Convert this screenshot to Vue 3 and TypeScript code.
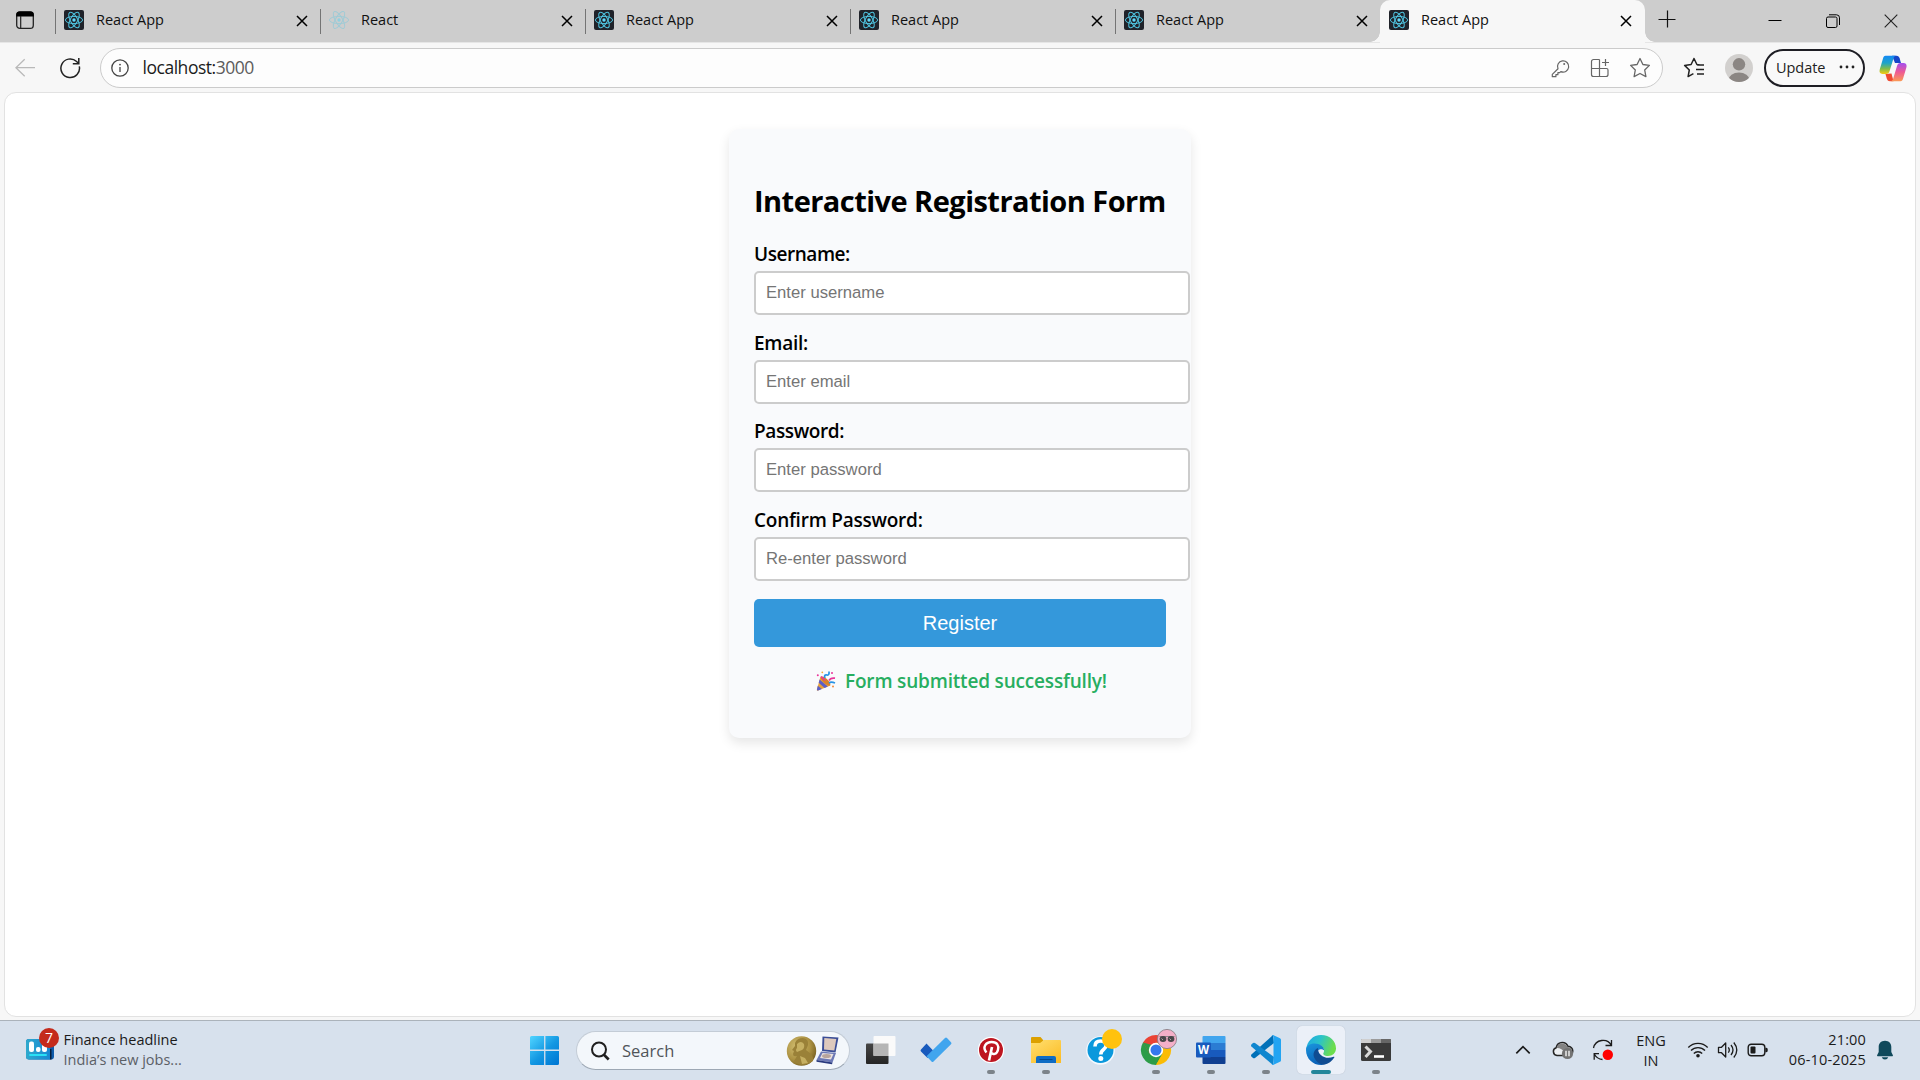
<script setup lang="ts">
import { ref } from 'vue'

interface Tab {
  title: string
  dark: boolean
  active?: boolean
}
interface Field {
  id: string
  label: string
  hint: string
  type: string
  cls: string
}

const tabs: Tab[] = [
  { title: 'React App', dark: true },
  { title: 'React', dark: false },
  { title: 'React App', dark: true },
  { title: 'React App', dark: true },
  { title: 'React App', dark: true },
  { title: 'React App', dark: true, active: true },
]

const fields: Field[] = [
  { id: 'username', label: 'Username:', hint: 'Enter username', type: 'text', cls: 'l-user' },
  { id: 'email', label: 'Email:', hint: 'Enter email', type: 'email', cls: 'l-mail' },
  { id: 'password', label: 'Password:', hint: 'Enter password', type: 'password', cls: 'l-pass' },
  { id: 'confirm', label: 'Confirm Password:', hint: 'Re-enter password', type: 'password', cls: 'l-conf' },
]

const values = ref<Record<string, string>>({ username: '', email: '', password: '', confirm: '' })
</script>

<template>
  <div class="screen">
    <header class="tabstrip">
      <div class="workspace">
        <svg width="20" height="20" viewBox="0 0 20 20">
          <rect x="1.7" y="2" width="16.6" height="16.4" rx="3.2" fill="none" stroke="#222" stroke-width="1.3" />
          <path d="M1.2 6.5V4.6A3.2 3.2 0 0 1 4.4 1.4h11.2a3.2 3.2 0 0 1 3.2 3.2v1.9z" fill="#000" />
          <path d="M5.7 6v12" stroke="#222" stroke-width="1.2" />
        </svg>
      </div>
      <div v-for="(tab, i) in tabs" :key="i" class="tab" :class="{ active: tab.active }">
        <span class="favicon" :class="{ dark: tab.dark }">
          <svg width="20" height="20" viewBox="-10 -10 20 20" fill="none" :stroke="tab.dark ? '#4fc3df' : '#9fcbd6'" stroke-width="1">
            <ellipse :rx="tab.dark ? 8.6 : 9.6" ry="3.6" />
            <ellipse :rx="tab.dark ? 8.6 : 9.6" ry="3.6" transform="rotate(60)" />
            <ellipse :rx="tab.dark ? 8.6 : 9.6" ry="3.6" transform="rotate(120)" />
            <circle r="1.7" :fill="tab.dark ? '#61dafb' : '#8fd0e0'" stroke="none" />
          </svg>
        </span>
        <span class="tab-title">{{ tab.title }}</span>
        <svg class="tab-close" width="12" height="12" viewBox="0 0 12 12">
          <path d="M1 1l10 10M11 1L1 11" stroke="#000" stroke-width="1.5" />
        </svg>
      </div>
      <svg class="plus" width="18" height="18" viewBox="0 0 18 18">
        <path d="M9.500 .5v17M.5 9.500h17" stroke="#111" stroke-width="1.2" />
      </svg>
      <div class="winbtns">
        <svg width="14" height="14" viewBox="0 0 14 14"><path d="M.5 6.500h13" stroke="#000" /></svg>
        <svg width="14" height="14" viewBox="0 0 14 14" fill="none" stroke="#000">
          <rect x=".5" y="3" width="10.500" height="10.500" rx="1.500" />
          <path d="M3 .8h7.500a3 3 0 0 1 3 3V11" />
        </svg>
        <svg width="14" height="14" viewBox="0 0 14 14"><path d="M.7.7l12.600 12.600M13.300.7L.7 13.300" stroke="#222" stroke-width="1.100" /></svg>
      </div>
    </header>

    <nav class="toolbar">
      <svg class="back" width="20" height="20" viewBox="0 0 20 20" fill="none" stroke="#b9b9b9" stroke-width="1.300">
        <path d="M20 9.700H.9M9.700 1.200L.9 9.700l8.800 8.500" />
      </svg>
      <svg class="reload" width="22" height="22" viewBox="0 0 22 22" fill="none" stroke="#222" stroke-width="1.500">
        <path d="M20.300 9.300A9.300 9.300 0 1 1 17.600 4.500L19.600 6.500M19.800 1v5.800h-6" />
      </svg>
      <div class="address">
        <svg width="18" height="18" viewBox="0 0 18 18" fill="none" stroke="#444" stroke-width="1.300">
          <circle cx="9" cy="9" r="8.200" />
          <path d="M9 8v5" />
          <circle cx="9" cy="5.600" r=".9" fill="#444" stroke="none" />
        </svg>
        <span class="url">localhost:<i>3000</i></span>
        <div class="addr-icons">
          <svg width="20" height="20" viewBox="0 0 20 20" fill="none" stroke="#666" stroke-width="1.200">
            <path d="M8 10.800L2.300 16.400v2.300h3.600v-2h2v-2h1.800l1.100-1.100a5.600 5.600 0 1 0-2.800-2.800z" stroke-linejoin="round" />
            <circle cx="14.200" cy="6" r="1" fill="#666" stroke="none" />
          </svg>
          <svg class="apps-add" width="20" height="20" viewBox="0 0 20 20" fill="none" stroke="#666" stroke-width="1.200">
            <path d="M9.500 1.500H3.500a2 2 0 0 0-2 2v13a2 2 0 0 0 2 2h12.500a2 2 0 0 0 2-2V12a1.500 1.500 0 0 0-1.500-1.500h-15M9.500 1.500v17M15.500 1v7M12 4.500h7" />
          </svg>
          <svg width="22" height="22" viewBox="0 0 22 22" fill="none" stroke="#666" stroke-width="1.300" stroke-linejoin="round">
            <path d="M11 1.500l2.900 6 6.500.9-4.700 4.600 1.200 6.600-5.900-3.100-5.900 3.100 1.200-6.600L1.600 8.400l6.500-.9z" />
          </svg>
        </div>
      </div>
      <svg class="favs" width="22" height="22" viewBox="0 0 22 22" fill="none" stroke="#222" stroke-width="1.500" stroke-linejoin="round">
        <path d="M17 8l-3.100-.5-2.900-6-2.900 6-6.500.9 4.700 4.600-1.200 6.600 5.300-2.900M14 8h7M13 12.500h8M14 17h7" />
      </svg>
      <svg class="avatar" width="28" height="28" viewBox="0 0 28 28">
        <defs><clipPath id="av"><circle cx="14" cy="14" r="14" /></clipPath></defs>
        <g clip-path="url(#av)">
          <path fill="#d2d0ce" d="M0 0h28v28H0z" />
          <circle cx="14" cy="10.300" r="6.200" fill="#8b8683" />
          <ellipse cx="14" cy="26" rx="10.500" ry="7.500" fill="#8b8683" />
        </g>
      </svg>
      <button class="update">
        <span>Update</span>
        <svg width="16" height="4" viewBox="0 0 16 4" fill="#222"><circle cx="2" cy="2" r="1.400" /><circle cx="8" cy="2" r="1.400" /><circle cx="14" cy="2" r="1.400" /></svg>
      </button>
      <svg class="copilot" width="28" height="27" viewBox="0 0 28 27">
        <defs>
          <linearGradient id="cpa" x1="0" y1="0" x2="0" y2="1"><stop offset="0" stop-color="#1389f5" /><stop offset=".4" stop-color="#1ea4c8" /><stop offset=".7" stop-color="#7dbb4e" /><stop offset="1" stop-color="#f8cb10" /></linearGradient>
          <linearGradient id="cpb" x1="0" y1="0" x2="0" y2="1"><stop offset="0" stop-color="#a24ef0" /><stop offset=".5" stop-color="#ee5a94" /><stop offset="1" stop-color="#fb9a55" /></linearGradient>
        </defs>
        <path d="M13 .8h4.500c1.700 0 2.600 1 3.100 2.500L22 8h-6z" fill="#1646c8" />
        <path d="M6.500 19l6-.5 2 7.800H11c-2 0-2.700-.9-3.300-3z" fill="#ef4b31" />
        <path d="M6.500.8h10.300c-1.300.4-2 1.500-2.500 3.200l-3.700 12c-.6 2-1.500 3-3.600 3H3.500C.8 19 0 17 .8 14.300L4 3.400C4.600 1.700 5 .8 6.500.8z" fill="url(#cpa)" />
        <path d="M21.500 26.200H12c1.200-.4 1.900-1.500 2.400-3.200L18 11c.6-2 1.500-3 3.500-3h3c2.700 0 3.600 1.900 2.800 4.700l-3.200 10.800c-.6 1.800-1.100 2.700-2.600 2.700z" fill="url(#cpb)" />
      </svg>
    </nav>

    <main class="viewport">
      <section class="card">
        <h2>Interactive Registration Form</h2>
        <form @submit.prevent>
          <div v-for="f in fields" :key="f.id" class="field">
            <label :for="f.id" :class="f.cls">{{ f.label }}</label>
            <input :id="f.id" v-model="values[f.id]" :type="f.type" :placeholder="f.hint" />
          </div>
          <button type="submit" class="register">Register</button>
        </form>
        <p class="success">
          <svg width="20" height="20" viewBox="0 0 20 20">
            <path d="M4.500 5.500L14.500 14.500 2 19.600Q.5 20 .9 18.400z" fill="#e9a23b" />
            <path d="M3.600 8.600l8.200 7L8.600 17 2.700 11.700zM1.800 14.800l4 3.300-3.500 1.400q-1.600.5-1.300-1.200z" fill="#5b5fc7" />
            <ellipse cx="9.600" cy="10" rx="6.200" ry="2.300" transform="rotate(43 9.600 10)" fill="#d9822b" />
            <path d="M5 5.500l4 4M13 9.500q1.500-3 6-2.300" stroke="#e9359b" stroke-width="1.700" fill="none" />
            <path d="M9 7q-1.500-3.500 2-3 2.500.5 2-3.500M13 12q2-1.800 6 0" stroke="#2893e6" stroke-width="1.700" fill="none" />
            <circle cx="1.800" cy="4.300" r="1" fill="#e9359b" /><circle cx="6.300" cy="1.300" r=".9" fill="#f2a93b" /><circle cx="16" cy="2" r="1" fill="#e9359b" /><circle cx="17" cy="15.500" r="1" fill="#f28a3b" />
          </svg>
          <span>Form submitted successfully!</span>
        </p>
      </section>
    </main>

    <footer class="taskbar">
      <div class="widgets">
        <div class="widget-icon">
          <svg width="28" height="21" viewBox="0 0 28 21">
            <defs><linearGradient id="wg" x1="0" x2="1"><stop stop-color="#2fa9cd" /><stop offset="1" stop-color="#1687d3" /></linearGradient></defs>
            <rect width="28" height="20.500" rx="3" fill="#0f5cab" />
            <path d="M3 0h21v20.500H3a3 3 0 0 1-3-3V3a3 3 0 0 1 3-3z" fill="url(#wg)" />
            <path d="M24 10h1.500v10.500H24z" fill="#071f3c" />
            <rect x="3" y="2.500" width="5" height="10.500" rx="2" fill="#fff" /><rect x="10" y="8" width="4.500" height="5" rx="2" fill="#fff" /><rect x="16" y="4" width="5" height="9" rx="2" fill="#fff" />
            <rect x="3" y="15" width="18" height="2" rx="1" fill="#29e0f5" />
          </svg>
          <span class="badge">7</span>
        </div>
        <div class="widget-text"><b>Finance headline</b><span>India’s new jobs...</span></div>
      </div>

      <div class="cell start">
        <svg width="48" height="48" viewBox="-24 -24 48 48">
          <defs><linearGradient id="win" gradientUnits="userSpaceOnUse" x1="-14" y1="-14" x2="12" y2="14"><stop stop-color="#4fd3ff" /><stop offset=".55" stop-color="#1297e2" /><stop offset="1" stop-color="#0078d4" /></linearGradient></defs>
          <path d="M-13.500-14H-.9V-.4H-15V-12.500a1.500 1.500 0 0 1 1.500-1.500zM.4-14H12.500a1.500 1.500 0 0 1 1.500 1.500V-.4H.4zM-15 .9H-.9V15H-13.500a1.500 1.500 0 0 1-1.500-1.500zM.4.9H14V13.500a1.500 1.500 0 0 1-1.500 1.500H.4z" fill="url(#win)" />
        </svg>
      </div>
      <div class="search">
        <svg width="20" height="20" viewBox="0 0 20 20" fill="none" stroke="#1f1f1f" stroke-width="2"><circle cx="9" cy="8.500" r="7" /><path d="M13.700 13.500l5 5" stroke-width="2.600" /></svg>
        <span>Search</span>
        <svg class="medal" width="54" height="32" viewBox="0 0 54 32">
          <defs><radialGradient id="md" cx=".35" cy=".35" r=".75"><stop stop-color="#d2bf72" /><stop offset=".6" stop-color="#ac9243" /><stop offset="1" stop-color="#715a1e" /></radialGradient></defs>
          <circle cx="15.500" cy="16" r="14.700" fill="url(#md)" />
          <path d="M9 8q2-5 8-5 6 1 5 7l-2 5 5 4q3 4 2 7-5 4-11 4-6-1-8-4l3-5q-4 1-4-2l1-3-2-1 3-4z" fill="#9a8138" />
          <path d="M11 9q4-4 7 0 1 4-2 6l-5 2q-2-2 0-4zM14 21l5 2 3 5-6 1z" fill="#c6b062" />
          <path d="M36.500 1.500l16 1-3 15-13.500-1.500z" fill="#3a4d96" /><path d="M38.300 3l12 1-2 11.500-10.300-1z" fill="#ddc9bd" />
          <path d="M35 16.500l15 1.500-3.500 9.500-16-2.500z" fill="#6b78b5" /><path d="M36.500 18l11 1-2.500 5.500-11-1.500z" fill="#e9e1df" /><ellipse cx="40.500" cy="21" rx="4.500" ry="2" fill="#b7a49d" />
          <path d="M30.500 25l16 2.500-.5 1.700-15.500-2.400z" fill="#27387d" />
        </svg>
      </div>

      <div class="apps">
        <div class="cell">
          <svg width="48" height="48" viewBox="-24 -24 48 48">
            <defs><linearGradient id="tv" x2="0" y2="1"><stop stop-color="#454545" /><stop offset="1" stop-color="#252525" /></linearGradient></defs>
            <rect x="-15" y="-6.500" width="22.500" height="20.500" rx="1" fill="url(#tv)" />
            <rect x="-7.500" y="-14" width="22" height="20" rx="1" fill="#fafafa" /><path d="M-7.500-6.500h15V6h-15z" fill="#b5b5b5" />
          </svg>
        </div>
        <div class="cell">
          <svg width="48" height="48" viewBox="-24 -24 48 48">
            <path d="M-9.500-6.500l7 7.500-6 7-6.500-6.500q-1-1 0-2z" fill="#185abd" /><path d="M9-12q1-1 2 0l4 4.200q1 1 0 2L-2.500 11.500q-1 1-2 0l-5-5.200z" fill="#41a5ee" />
          </svg>
        </div>
        <div class="cell run">
          <svg width="48" height="48" viewBox="-24 -24 48 48">
            <circle r="13.200" fill="#fff" /><circle r="12" fill="#bd1520" />
            <path d="M-2 10.500L1-3" stroke="#fff" stroke-width="2.700" fill="none" /><path d="M-4.600 2.500C-9-3 -5-8 .7-8S8-4.300 7-.3C6 4.500 1.500 5 0 2.300" stroke="#fff" stroke-width="2.400" fill="none" />
          </svg>
        </div>
        <div class="cell run">
          <svg width="48" height="48" viewBox="-24 -24 48 48">
            <defs><linearGradient id="fo" x2=".8" y2="1"><stop stop-color="#ffdf70" /><stop offset="1" stop-color="#fcbd27" /></linearGradient></defs>
            <path d="M-15-12q0-1 1-1h8.500l3 3.500L-5-5h-10z" fill="#dca000" /><path d="M-15-7h9l4-3h16q1 0 1 1v22h-30z" fill="url(#fo)" />
            <path d="M-10 13V8q0-2 2-2H8q2 0 2 2v5z" fill="#0f6cc4" /><path d="M-6.500 9.500h13" stroke="#064a8d" />
          </svg>
        </div>
        <div class="cell">
          <svg width="48" height="48" viewBox="-24 -24 48 48">
            <circle cx="-.5" cy=".5" r="14.300" fill="#f5faff" /><circle cx="-.5" cy="0" r="13" fill="#0a98dc" />
            <path d="M-6-3.500Q-6-9-.5-9T5-4.300C5-.5-.2-.5-.2 4.500" stroke="#fff" stroke-width="3.600" fill="none" /><circle cx="-.2" cy="8.500" r="2.500" fill="#fff" /><circle cx="11" cy="-11" r="10" fill="#ffc20e" />
          </svg>
        </div>
        <div class="cell run">
          <svg width="48" height="48" viewBox="-24 -24 48 48">
            <path d="M0 0L-13-7.500A15 15 0 0 1 13-7.500z" fill="#ea4335" /><path d="M0 0L13-7.500A15 15 0 0 1 0 15z" fill="#fbbc05" /><path d="M0 0V15A15 15 0 0 1-13-7.500z" fill="#2c9c48" />
            <path d="M0-7.300H13L6.500 3.800zM-6.500 3.800L-13-7.500-1-7.300z" fill="#ea4335" /><path d="M-6.500 3.800L-13-7.500-4-5z" fill="#2c9c48" /><path d="M6.500 3.800L0 15-6 4z" fill="#2c9c48" /><path d="M6.500 3.800L0 15 12 8 13-7.300H0z" fill="#fbbc05" />
            <circle r="7.200" fill="#fff" /><circle r="5.500" fill="#3478ec" />
            <circle cx="11" cy="-11" r="9.600" fill="#f4afc8" stroke="#8d8188" stroke-width=".9" />
            <path d="M3.500-13.500h15" stroke="#8d8188" /><ellipse cx="7" cy="-11" rx="3.400" ry="3" fill="#4a474a" /><ellipse cx="15" cy="-11" rx="3.400" ry="3" fill="#4a474a" /><path d="M5.500-11.500l1.500 1.500M13.500-11.500l1.500 1.500" stroke="#b0a4a9" />
          </svg>
        </div>
        <div class="cell run">
          <svg width="48" height="48" viewBox="-24 -24 48 48">
            <path d="M-8.500-13q0-1 1-1h21q1 0 1 1v6h-23z" fill="#41a5ee" /><path d="M-8.500-7h23V0h-23z" fill="#2b7cd3" /><path d="M-8.500 0h23v7h-23z" fill="#185abd" /><path d="M-8.500 7h23v6q0 1-1 1h-21q-1 0-1-1z" fill="#103f91" />
            <rect x="-15" y="-7.500" width="15" height="15" rx="1" fill="#185abd" />
            <text x="-7.500" y="4.300" text-anchor="middle" font-family="Open Sans, sans-serif" font-size="11.500" font-weight="700" fill="#fff">W</text>
          </svg>
        </div>
        <div class="cell run">
          <svg width="48" height="48" viewBox="-24 -24 48 48">
            <path d="M7-15l1 8L-11 8q-1 .7-2 0l-1.600-1.600q-.8-1 0-1.800z" fill="#0070b8" /><path d="M7 15l1-8L-11-7q-1-.7-2 0l-1.600 1.600q-.8 1 0 1.800z" fill="#0f86cf" />
            <path d="M7-15l7 3.200q1 .5 1 1.600v20.400q0 1.100-1 1.600L7 15q-1 0-1.500-1 2 .8 2-1.500v-25q0-2.300-2-1.500z" fill="#23a4f2" />
          </svg>
        </div>
        <div class="cell run current">
          <svg width="48" height="48" viewBox="-24 -24 48 48">
            <defs>
              <linearGradient id="ea" x1="0" x2="1" y2=".3"><stop stop-color="#1fa6e6" /><stop offset=".5" stop-color="#2bc3c9" /><stop offset="1" stop-color="#6cdd4c" /></linearGradient>
              <linearGradient id="eb" x2=".3" y2="1"><stop stop-color="#1a96de" /><stop offset="1" stop-color="#0b62b8" /></linearGradient>
            </defs>
            <path d="M-15 0C-14-9-8-15 0-15 9-15 15-9 15-1.500 15 3 11.500 6 7 6 3.500 6 1.500 4.500 2.500 3 5-2-1-7-7-5-11-4-14-2-15 0z" fill="url(#ea)" />
            <path d="M-15 0c0-4 4-6.500 8.500-6.500C-1-6.500 3-3.500 3.200.5 2-1.500-4-2-4 4-4 10 1 15 3 14.700-6 16.500-15 10-15 0z" fill="url(#eb)" />
            <path d="M-3-2C-7 0-9 4-6 9-4 12.500 0 15 3 14.700 7.500 14 11 11 13.300 7.500 13.700 6.800 13 6.500 12.500 6.800 5 10-3.500 5.500-3-2z" fill="#104c92" />
          </svg>
        </div>
        <div class="cell run">
          <svg width="48" height="48" viewBox="-24 -24 48 48">
            <rect x="-15" y="-11" width="30" height="22" rx="1.500" fill="#3a3a3a" /><path d="M-14-11H-5v4h-10v-3q0-1 1-1z" fill="#cfcfcf" /><path d="M-5-11H5v4H-5z" fill="#9b9b9b" /><path d="M5-11h9q1 0 1 1v3H5z" fill="#666" />
            <path d="M-10.500-3.500L-5.500 1.500-10.500 7" stroke="#d8d8d8" stroke-width="3" fill="none" /><path d="M-2 6.500H8" stroke="#fff" stroke-width="2.600" />
          </svg>
        </div>
      </div>

      <div class="tray">
        <svg width="16" height="10" viewBox="0 0 16 10" fill="none" stroke="#1b1b1b" stroke-width="1.700"><path d="M1.300 8.300L8 1.600l6.700 6.700" /></svg>
        <svg class="cloud" width="22" height="20" viewBox="0 0 22 20">
          <path d="M5 15.500a4 4 0 0 1-.8-7.800Q5 3.500 8.500 2.800 13.500 1.500 16 6.300q4.500.5 4.800 4.700-.3 4-4 4.500z" fill="#eceff2" stroke="#252525" stroke-width="1.500" />
          <path d="M4.600 8Q9 7.500 13.500 13l6.500-3Q19 7.200 15.600 7 13.500 2.800 9 3.500 5.500 4.300 4.600 8z" fill="#838383" />
          <circle cx="15.500" cy="13.500" r="5.600" fill="#737373" /><path d="M14 10.800v5.400M17 10.800v5.400" stroke="#fff" stroke-width="1.300" />
        </svg>
        <svg class="sync" width="22" height="22" viewBox="0 0 22 22" fill="none" stroke="#1b1b1b" stroke-width="1.300">
          <path d="M1.500 9A9.700 9.700 0 0 1 19.500 6.500M19.500 1v5.500h-6M7 14.700H2.200v6M2.200 15Q5 20 10.500 20.500" /><circle cx="15.800" cy="15.800" r="5.200" fill="red" stroke="none" />
        </svg>
        <div class="lang"><span>ENG</span><span>IN</span></div>
        <svg class="wifi" width="22" height="18" viewBox="0 0 22 18" fill="none" stroke="#1b1b1b" stroke-width="1.400">
          <path d="M1.300 6.500a13.500 13.500 0 0 1 19.400 0M4 9.600a9.800 9.800 0 0 1 14 0M6.800 12.500a5.900 5.900 0 0 1 8.400 0" /><circle cx="11" cy="14.800" r="1.800" fill="#1b1b1b" stroke="none" />
        </svg>
        <svg class="sound" width="22" height="18" viewBox="0 0 22 18" fill="none" stroke="#1b1b1b" stroke-width="1.300" stroke-linejoin="round">
          <path d="M1.500 6.300h3L8.700 2v14l-4.200-4.300h-3z" /><path d="M11.300 6.300q2 2.700 0 5.400M14 4q4 5 0 10M16.800 1.500q6 7.500 0 15" />
        </svg>
        <svg class="battery" width="22" height="14" viewBox="0 0 22 14">
          <rect x="1.200" y="1.200" width="16.600" height="11.600" rx="3" fill="none" stroke="#1b1b1b" stroke-width="1.400" /><rect x="3.500" y="3.500" width="5" height="7" rx="1" fill="#1b1b1b" /><path d="M18.300 4.800h1q1.500 0 1.500 2.200t-1.500 2.200h-1z" fill="#1b1b1b" />
        </svg>
        <div class="clock"><span class="time">21:00</span><span class="date">06-10-2025</span></div>
        <svg class="bell" width="18" height="20" viewBox="0 0 18 20" fill="#10495b"><path d="M9 .8c4 0 6.300 2.800 6.300 6.300v5l1.600 3.200q.3.900-.6.900H1.700q-.9 0-.6-.9l1.600-3.200v-5C2.700 3.600 5 .8 9 .8zM5.800 17.300h6.400Q11.500 19.500 9 19.500t-3.200-2.200z" /></svg>
      </div>
    </footer>
  </div>
</template>

<style>
body { margin: 0; overflow: hidden; }
</style>

<style scoped>
.screen { display: flex; flex-direction: column; width: 1920px; height: 1080px; background: #f7f7f7; font-family: "Open Sans", "Noto Sans", sans-serif; color: #111; overflow: hidden; }
svg { display: block; flex: none; }
.tabstrip { display: flex; height: 42px; flex: none; background: #cdcdcd; box-sizing: border-box; }
.workspace { width: 56px; padding: 10px 0 0 15px; box-sizing: border-box; }
.tab { position: relative; display: flex; align-items: flex-start; width: 265px; box-sizing: border-box; padding-left: 8px; }
.tab::before { content: ""; position: absolute; left: -1px; top: 9px; width: 1px; height: 25px; background: #747474; }
.tab.active { background: #f7f7f7; border-radius: 10px 10px 0 0; height: 43px; margin-left: -1px; padding-left: 9px; }
.tab.active::before, .tab.active::after { content: ""; position: absolute; top: auto; bottom: 1px; width: 10px; height: 10px; }
.tab.active::before { left: -10px; background: radial-gradient(circle at 0 0, transparent 9.5px, #f7f7f7 10px); }
.tab.active::after { right: -10px; background: radial-gradient(circle at 100% 0, transparent 9.5px, #f7f7f7 10px); }
.favicon { width: 20px; height: 20px; margin-top: 10px; border-radius: 2px; }
.favicon.dark { background: #20232a; }
.tab-title { margin: 9px 0 0 12px; font-size: 14.500px; line-height: 22px; flex: 1; color: #111; }
.tab-close { margin: 14.5px 13px 0 0; }
.plus { margin: 10px 0 0 13px; }
.winbtns { display: flex; margin: 14px 0 0 auto; padding-right: 22px; gap: 44px; }
.toolbar { display: flex; height: 50px; flex: none; align-items: flex-start; border-top: 1px solid #e6e6e6; box-sizing: border-box; }
.back { margin: 15px 0 0 15px; }
.reload { margin: 14px 0 0 24px; }
.address { display: flex; align-items: center; width: 1563px; height: 40px; margin: 5px 0 0 19px; border: 1px solid #cbcbcb; border-radius: 20px; background: #fdfdfd; box-sizing: border-box; padding-left: 10px; }
.url { margin-left: 13.500px; padding-bottom: 2px; font-size: 17.500px; line-height: 24px; letter-spacing: -.47px; color: #1b1b1b; }
.url i { font-style: normal; color: #5c5c5c; }
.addr-icons { display: flex; align-items: center; margin-left: auto; padding-right: 11px; gap: 20px; }
.apps-add { margin-right: -1px; }
.favs { margin: 14px 0 0 20px; }
.avatar { margin: 11px 0 0 20px; }
.update { display: flex; align-items: center; width: 101px; height: 38px; margin: 6px 0 0 11px; border: 2.500px solid #1e1e24; border-radius: 19px; background: #f9f9f9; box-sizing: border-box; padding: 0 0 2px 10px; font: 14.500px "Open Sans", sans-serif; letter-spacing: -.05px; color: #222; }
.update span { width: 62.500px; text-align: left; }
.copilot { margin: 12px 0 0 14px; }
.viewport { flex: none; width: 1912px; height: 925px; margin: 0 0 3px 4px; border: 1px solid #e2e2e2; border-radius: 12px; background: #fff; box-sizing: border-box; padding-top: 36px; }
.card { display: flow-root; width: 412px; margin: 0 auto; padding: 25px 25px 44px; background: #f9fafc; border-radius: 10px; box-shadow: 0 5px 12px rgba(0, 0, 0, .1); height: 540px; }
h2 { margin: 27px 0 19.750px; font-size: 29px; line-height: 40px; font-weight: 700; letter-spacing: -.54px; color: #000; white-space: nowrap; }
.field { display: flex; flex-direction: column; margin-bottom: 14.750px; }
.field:last-of-type { margin-bottom: 18px; }
label { font-size: 19px; line-height: 26px; font-weight: 600; color: #000; margin-bottom: 4px; white-space: nowrap; }
.l-user { letter-spacing: -.45px; }
.l-mail { letter-spacing: -.25px; }
.l-pass { letter-spacing: -.38px; }
.l-conf { letter-spacing: -.24px; }
input { width: 436px; height: 44px; border: 2px solid #ccc; border-radius: 5px; padding: 0 10px; box-sizing: border-box; background: #fff; font: 16.670px "Liberation Sans", sans-serif; outline: 0; }
input::placeholder { color: #757575; opacity: 1; }
.register { display: block; width: 412px; height: 48px; border: 0; border-radius: 5px; background: #3498db; color: #fff; font: 20px "Liberation Sans", sans-serif; padding: 0; }
.success { display: flex; align-items: center; margin: 20.500px 0 0 61.500px; font-size: 19px; line-height: 26px; font-weight: 600; letter-spacing: -.18px; color: #27ae60; white-space: nowrap; }
.success span { margin-left: 9.500px; }
.taskbar { display: flex; height: 60px; flex: none; border-top: 1px solid #abb3bb; box-sizing: border-box; background: #d7e1ed; }
.widgets { display: flex; width: 518px; box-sizing: border-box; padding-left: 26px; }
.widget-icon { position: relative; width: 28px; height: 21px; margin-top: 18px; }
.badge { position: absolute; left: 13px; top: -11px; width: 20px; height: 20px; border-radius: 50%; background: #c42b1c; color: #fff; font-size: 14px; line-height: 20px; text-align: center; }
.widget-text { display: flex; flex-direction: column; margin: 9px 0 0 9.500px; font-size: 14.500px; line-height: 20px; white-space: nowrap; }
.widget-text b { font-weight: 400; color: #1b1b1b; }
.widget-text span { color: #5b6066; }
.cell { position: relative; width: 55px; height: 59px; display: flex; justify-content: center; align-items: flex-start; padding-top: 5px; box-sizing: border-box; }
.start { width: 54px; }
.search { display: flex; align-items: center; width: 274px; height: 39px; margin: 10px 3px 0 4px; border-radius: 20px; background: #f3f7fb; border: 1px solid #c3ccd6; border-bottom-color: #9da8b4; box-sizing: border-box; padding-left: 13px; color: #505459; font-size: 16.500px; }
.search span { margin-left: 12px; }
.medal { margin-left: auto; margin-right: 9.500px; }
.apps { display: flex; }
.run::after { content: ""; position: absolute; left: 24px; top: 49px; width: 8px; height: 4px; border-radius: 2px; background: #7c838a; }
.current svg { background: #ebf0f8; border-radius: 5px; box-shadow: 0 0 1px #a8b2c0; }
.current::after { left: 18px; width: 20px; background: #23869a; }
.tray { display: flex; align-items: flex-start; margin-left: auto; padding-right: 26px; }
.tray > svg:first-child { margin-top: 24px; }
.tray .cloud { margin: 19px 0 0 21px; }
.tray .sync { margin: 18px 0 0 18px; }
.lang { display: flex; flex-direction: column; width: 34px; margin: 10px 0 0 20px; align-items: center; font-size: 14.500px; line-height: 20px; color: #1b1b1b; }
.tray .wifi { margin: 20px 0 0 19px; }
.tray .sound { margin: 20px 0 0 8px; }
.tray .battery { margin: 22px 0 0 8px; }
.clock { display: flex; flex-direction: column; width: 84px; margin: 9px 0 0 13px; align-items: flex-end; font-size: 14.500px; line-height: 20px; letter-spacing: .15px; color: #1b1b1b; white-space: nowrap; }
.tray .bell { margin: 19px 0 0 10px; }
</style>
